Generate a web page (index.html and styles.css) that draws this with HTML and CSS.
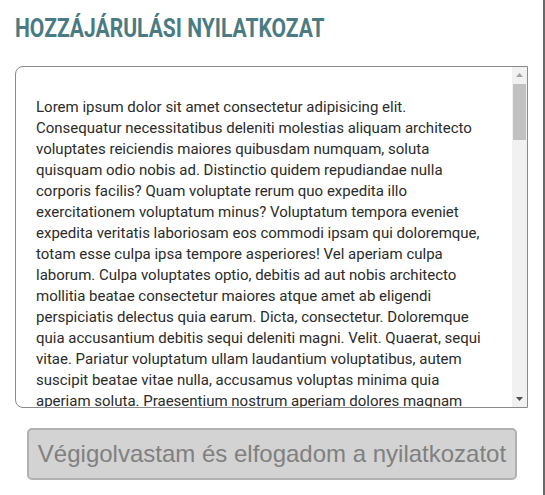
FILE: index.html
```html
<!DOCTYPE html>
<html lang="hu">
<head>
<meta charset="utf-8">
<title>Hozzájárulási nyilatkozat</title>
<link rel="stylesheet" href="styles.css">
</head>
<body>
<div class="page">
  <h1 class="title"><span class="title-text">HOZZÁJÁRULÁSI NYILATKOZAT</span></h1>
  <div class="terms">
    <div class="terms-text">
      <p class="terms-lead">Lorem ipsum dolor sit amet consectetur adipisicing elit.</p>
      <p class="terms-body">Consequatur necessitatibus deleniti molestias aliquam architecto voluptates reiciendis maiores quibusdam numquam, soluta quisquam odio nobis ad. Distinctio quidem repudiandae nulla corporis facilis? Quam voluptate rerum quo expedita illo exercitationem voluptatum minus? Voluptatum tempora eveniet expedita veritatis laboriosam eos commodi ipsam qui doloremque, totam esse culpa ipsa tempore asperiores! Vel aperiam culpa laborum. Culpa voluptates optio, debitis ad aut nobis architecto mollitia beatae consectetur maiores atque amet ab eligendi perspiciatis delectus quia earum. Dicta, consectetur. Doloremque quia accusantium debitis sequi deleniti magni. Velit. Quaerat, sequi vitae. Pariatur voluptatum ullam laudantium voluptatibus, autem suscipit beatae vitae nulla, accusamus voluptas minima quia aperiam&nbsp;soluta. Praesentium nostrum aperiam dolores magnam quos, eveniet natus inventore. Sunt eius autem, repellat quasi nihil ipsam aspernatur dolore quae velit magnam maxime fugiat laboriosam, quibusdam fuga.</p>
    </div>
    <div class="scrollbar" aria-hidden="true">
      <div class="scroll-btn">
        <svg width="7" height="4" viewBox="0 0 7 4"><path d="M0 4 L3.5 0 L7 4 Z" fill="#a3a3a3"/></svg>
      </div>
      <div class="scroll-track"><div class="scroll-thumb"></div></div>
      <div class="scroll-btn">
        <svg width="7" height="4" viewBox="0 0 7 4"><path d="M0 0 L3.5 4 L7 0 Z" fill="#505050"/></svg>
      </div>
    </div>
  </div>
  <button class="accept" type="button" disabled>Végigolvastam és elfogadom a nyilatkozatot</button>
</div>
</body>
</html>
```

FILE: styles.css
```css
html, body {
  margin: 0;
  padding: 0;
  background: #ffffff;
}

.page {
  box-sizing: border-box;
  width: 545px;
  min-height: 495px;
  border-right: 2px solid #6a6a6a;
  padding: 13px 0 0 15px;
  display: flex;
  flex-direction: column;
  align-items: flex-start;
}

.title {
  margin: 0;
  height: 30px;
  line-height: 30px;
  font-family: Roboto, "Noto Sans", sans-serif;
  font-weight: 700;
  font-size: 26px;
  color: #4b7b82;
  white-space: nowrap;
}

.title-text {
  display: inline-block;
  transform: scaleX(0.81);
  transform-origin: left center;
}

.terms {
  box-sizing: border-box;
  margin-top: 23px;
  width: 513px;
  height: 342px;
  border: 1px solid #8a8a8a;
  border-radius: 8px 0 0 8px;
  display: flex;
  overflow: hidden;
}

.terms-text {
  flex: 1;
  min-width: 0;
  overflow: hidden;
  padding: 30px 14px 0 20px;
  font-family: Roboto, "Noto Sans", sans-serif;
  font-size: 15px;
  line-height: 21px;
  color: #2b2b2b;
}

.terms-text p {
  margin: 0;
}

.scrollbar {
  width: 15px;
  flex: none;
  background: #f1f1f1;
  display: flex;
  flex-direction: column;
}

.scroll-btn {
  height: 16px;
  display: flex;
  align-items: center;
  justify-content: center;
}

.scroll-track {
  flex: 1;
  padding: 1px 1px 0 1px;
}

.scroll-thumb {
  height: 56px;
  background: #c1c1c1;
}

.accept {
  box-sizing: border-box;
  margin: 20px 0 0 12px;
  width: 490px;
  height: 52px;
  padding: 0 8px;
  background: #d3d3d3;
  border: 2px solid #b1b1b1;
  border-radius: 5px;
  font-family: "Liberation Sans", Arial, sans-serif;
  font-size: 24px;
  color: #808080;
  cursor: default;
}
```
